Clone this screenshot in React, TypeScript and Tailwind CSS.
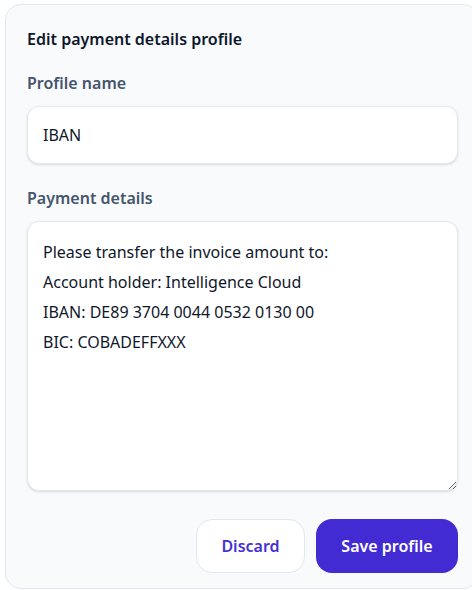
import React, { useState } from 'react';

const DEFAULT_DETAILS = `Please transfer the invoice amount to:
Account holder: Intelligence Cloud
IBAN: DE89 3704 0044 0532 0130 00
BIC: COBADEFFXXX`;

export default function App() {
  const [name, setName] = useState('IBAN');
  const [details, setDetails] = useState(DEFAULT_DETAILS);

  return (
    <div className="min-h-screen overflow-hidden bg-white pl-[5px] pt-[4px] font-['Noto_Sans',sans-serif]">
      <div className="h-[585px] w-[474px] rounded-2xl border border-slate-200 bg-slate-50 pl-[21px] pr-[15px] pt-[24px]">
        <div className="w-[431px]">
          <h2 className="text-base font-semibold leading-5 text-slate-900">Edit payment details profile</h2>

          <div className="mt-[24px] flex flex-col gap-[13px]">
            <label className="text-base font-semibold leading-5 text-slate-600">Profile name</label>
            <input
              type="text"
              value={name}
              onChange={(e) => setName(e.target.value)}
              className="h-[58px] w-full rounded-xl border border-slate-200 bg-white px-[15px] text-base text-slate-900 shadow-sm outline-none"
            />
          </div>

          <div className="mt-[24px] flex flex-col gap-[13px]">
            <label className="text-base font-semibold leading-5 text-slate-600">Payment details</label>
            <textarea
              value={details}
              onChange={(e) => setDetails(e.target.value)}
              className="h-[270px] w-full resize-y rounded-xl border border-slate-200 bg-white px-[15px] pb-[15px] pt-[15px] text-base leading-[30px] text-slate-900 shadow-sm outline-none"
            />
          </div>

          <div className="mt-[28px] flex justify-end gap-[11px]">
            <button
              type="button"
              className="h-[54px] w-[109px] rounded-2xl border border-slate-200 bg-white text-base font-semibold text-[#4330d6]"
            >
              Discard
            </button>
            <button
              type="button"
              className="h-[54px] w-[142px] rounded-2xl bg-[#432bd4] text-base font-semibold text-white"
            >
              Save profile
            </button>
          </div>
        </div>
      </div>
    </div>
  );
}
